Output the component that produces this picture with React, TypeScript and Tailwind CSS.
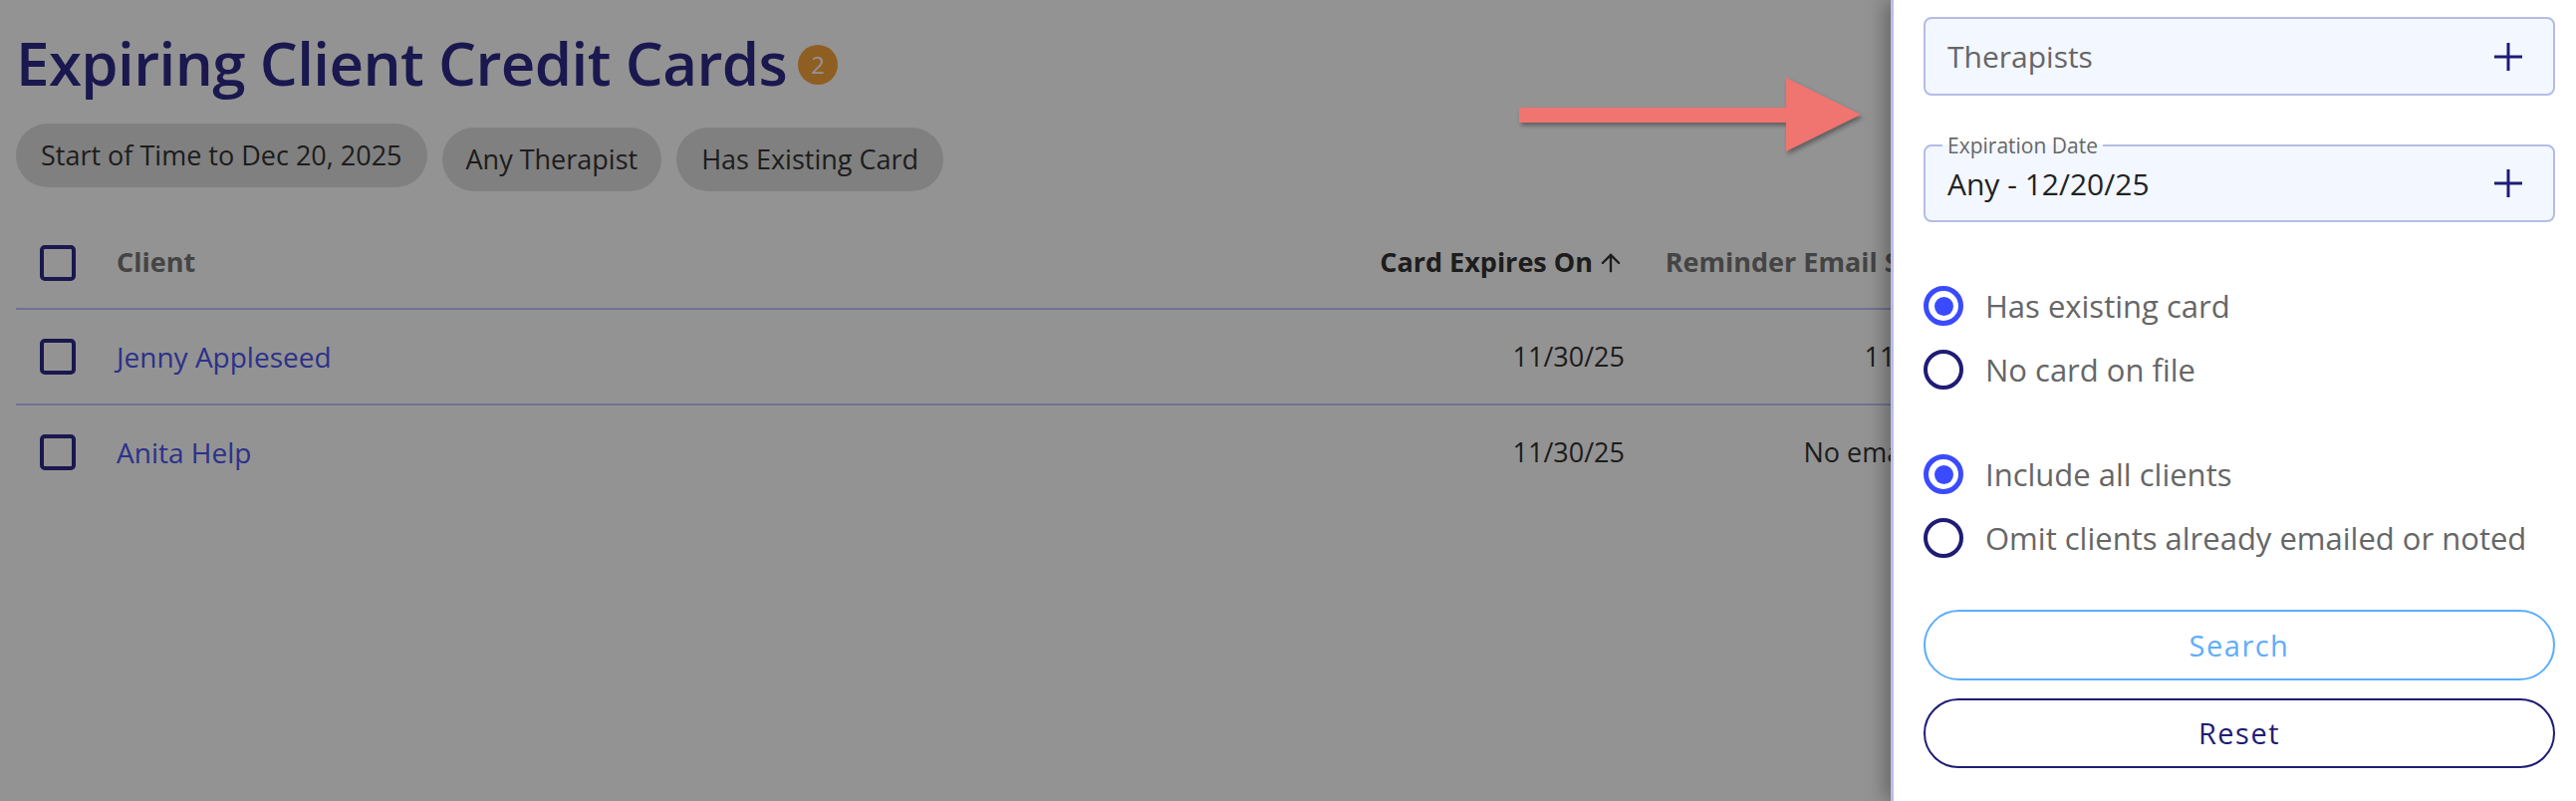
import React from 'react';
import { ArrowUp } from 'lucide-react';

const FONT = { fontFamily: '"Open Sans", "Noto Sans", sans-serif' };

type Row = { id: number; name: string; expires: string; reminder: string };

const rows: Row[] = [
  { id: 1, name: 'Jenny Appleseed', expires: '11/30/25', reminder: '11/30/25' },
  { id: 2, name: 'Anita Help', expires: '11/30/25', reminder: 'No email sent' },
];

const Checkbox = () => (
  <div className="w-[36px] h-[36px] border-[4px] border-[#2e2a88] rounded-[5px] bg-white" />
);

const PlusIcon = () => (
  <svg width="28" height="28" viewBox="0 0 28 28" className="shrink-0">
    <path d="M14 0v28M0 14h28" stroke="#1f1c75" strokeWidth="3" fill="none" />
  </svg>
);

const Radio = ({ checked, label }: { checked: boolean; label: string }) => (
  <label className="flex items-center h-[64px] gap-[22px] cursor-pointer">
    {checked ? (
      <span className="w-[40px] h-[40px] rounded-full border-[5px] border-[#3a4bff] flex items-center justify-center shrink-0">
        <span className="w-[19px] h-[19px] rounded-full bg-[#3a4bff]" />
      </span>
    ) : (
      <span className="w-[40px] h-[40px] rounded-full border-[4px] border-[#1f1c75] shrink-0" />
    )}
    <span className="text-[31px] text-[#666666]">{label}</span>
  </label>
);

export default function App() {
  return (
    <div className="relative w-full h-[804px] overflow-hidden bg-white" style={FONT}>
      {/* Page behind the drawer */}
      <div className="pt-[33px] px-4">
        <div className="flex items-start">
          <h1 className="text-[60px] leading-[60px] font-semibold text-[#2e2a88] tracking-[-0.6px]">
            Expiring Client Credit Cards
          </h1>
          <span className="ml-[11px] mt-[12px] w-[40px] h-[40px] rounded-full bg-[#f8a33b] text-white text-[24px] flex items-center justify-center">
            2
          </span>
        </div>

        <div className="flex items-start gap-[15px] mt-[31px]">
          <span className="h-[64px] px-[25px] rounded-full bg-[#dedede] text-[#333] text-[27px] flex items-center">
            Start of Time to Dec 20, 2025
          </span>
          <span className="mt-[4px] h-[64px] px-[24px] rounded-full bg-[#dedede] text-[#333] text-[27px] flex items-center">
            Any Therapist
          </span>
          <span className="mt-[4px] h-[64px] px-[25px] rounded-full bg-[#dedede] text-[#333] text-[27px] flex items-center">
            Has Existing Card
          </span>
        </div>

        <div className="mt-[26px] w-[2554px]">
          <div className="grid grid-cols-[101px_1fr_300px_353px_586px] items-center h-[93px] border-b-2 border-[#c0c6fb] text-[27px] font-bold">
            <div className="pl-[24px]">
              <Checkbox />
            </div>
            <div className="text-[#777]">Client</div>
            <div className="flex items-center justify-end gap-[4px] text-[#333]">
              Card Expires On
              <ArrowUp size={28} strokeWidth={2} className="text-[#333]" />
            </div>
            <div className="flex items-center justify-end gap-[4px] text-[#777] whitespace-nowrap">
              Reminder Email Sent
              <ArrowUp size={28} strokeWidth={2} className="opacity-0" />
            </div>
            <div className="pl-[40px] text-[#777]">Notes</div>
          </div>
          {rows.map((r, i) => (
            <div
              key={r.id}
              className={`grid grid-cols-[101px_1fr_300px_353px_586px] items-center text-[27px] ${
                i < rows.length - 1 ? 'h-[96px] border-b-2 border-[#c0c6fb]' : 'h-[94px]'
              }`}
            >
              <div className="pl-[24px]">
                <Checkbox />
              </div>
              <div className="text-[#4d55f0] text-[28px]">{r.name}</div>
              <div className="text-right text-[#333]">{r.expires}</div>
              <div className="text-right text-[#333] whitespace-nowrap">{r.reminder}</div>
              <div />
            </div>
          ))}
        </div>
      </div>

      {/* Backdrop */}
      <div className="absolute inset-0 bg-black/[0.424]" />

      {/* Annotation arrow */}
      <svg
        className="absolute left-[1515px] top-[70px]"
        width="365"
        height="95"
        viewBox="1515 70 365 95"
        style={{ filter: 'drop-shadow(2px 3px 2px rgba(0,0,0,0.35))' }}
      >
        <rect x="1525" y="108" width="270" height="15" fill="#f07470" />
        <polygon points="1793,78 1793,152 1868,115" fill="#f07470" />
      </svg>

      {/* Filter drawer */}
      <aside className="absolute right-0 top-0 h-full w-[688px] bg-white border-l-[3px] border-[#b8bfe8] shadow-[-6px_0_18px_rgba(0,0,0,0.3)] pl-[30px] pr-[21px]">
        <div className="mt-[17px] h-[79px] border-2 border-[#b4bce6] rounded-[8px] bg-[#f3f7ff] flex items-center justify-between pl-[22px] pr-[31px]">
          <span className="text-[30px] text-[#666]">Therapists</span>
          <PlusIcon />
        </div>

        <fieldset className="mt-[39px] border-2 border-[#b4bce6] rounded-[8px] bg-[#f3f7ff] pl-[17px] pr-[31px] pb-[17px]">
          <legend className="px-[5px] text-[21px] leading-[22px] text-[#666]">Expiration Date</legend>
          <div className="flex items-center justify-between h-[40px] pl-[5px] mt-[7px]">
            <span className="text-[30px] text-[#222]">Any - 12/20/25</span>
            <PlusIcon />
          </div>
        </fieldset>

        <div className="mt-[52px]">
          <Radio checked label="Has existing card" />
          <Radio checked={false} label="No card on file" />
        </div>
        <div className="mt-[41px]">
          <Radio checked label="Include all clients" />
          <Radio checked={false} label="Omit clients already emailed or noted" />
        </div>

        <button className="mt-[40px] w-full h-[71px] rounded-full border-2 border-[#5dadfd] text-[#5dadfd] text-[29px] font-medium tracking-[1.5px]">
          Search
        </button>
        <button className="mt-[18px] w-full h-[70px] rounded-full border-2 border-[#1f1c75] text-[#1f1c75] text-[29px] font-medium tracking-[1.5px]">
          Reset
        </button>
      </aside>
    </div>
  );
}
